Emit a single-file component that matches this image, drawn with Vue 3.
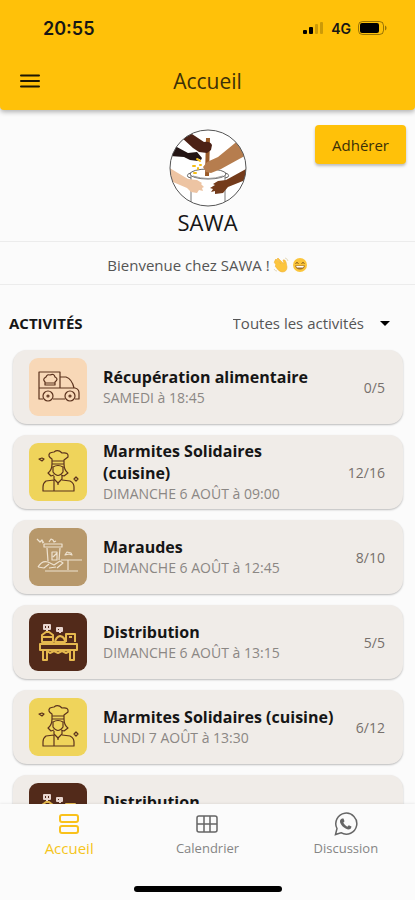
<script setup>
import { computed, ref } from 'vue';

const filter = ref('');
const currentTab = ref('home');

const activities = [
  { id: 1, type: 'truck', title: 'Récupération alimentaire', date: 'SAMEDI à 18:45', places: '0/5' },
  { id: 2, type: 'chef', title: 'Marmites Solidaires (cuisine)', date: 'DIMANCHE 6 AOÛT à 09:00', places: '12/16' },
  { id: 3, type: 'street', title: 'Maraudes', date: 'DIMANCHE 6 AOÛT à 12:45', places: '8/10' },
  { id: 4, type: 'stand', title: 'Distribution', date: 'DIMANCHE 6 AOÛT à 13:15', places: '5/5' },
  { id: 5, type: 'chef', title: 'Marmites Solidaires (cuisine)', date: 'LUNDI 7 AOÛT à 13:30', places: '6/12' },
  { id: 6, type: 'stand', title: 'Distribution', date: '', places: '' },
];

const titles = [...new Set(activities.map((a) => a.title))];
const visibleActivities = computed(() =>
  activities.filter((a) => !filter.value || a.title === filter.value)
);
</script>

<template>
  <div class="app">
    <header class="header">
      <div class="status">
        <span class="status__time">20:55</span>
        <div class="status__right">
          <svg width="21" height="14" viewBox="0 0 21 14">
            <rect x="0" y="9" width="4" height="4" rx="1" />
            <rect x="6" y="6" width="4" height="7" rx="1" />
            <rect x="12" y="3" width="3" height="10" rx="1" opacity="0.2" />
            <rect x="17" y="1" width="3" height="12" rx="1" opacity="0.2" />
          </svg>
          <span class="status__network">4G</span>
          <svg width="30" height="14" viewBox="0 0 30 14">
            <rect x="0.5" y="0.5" width="25" height="13" rx="4" fill="none" stroke="#000" opacity="0.4" />
            <rect x="2" y="2" width="19" height="10" rx="2" />
            <path d="M27 4.500c2 .7 2 4.300 0 5z" opacity="0.4" />
          </svg>
        </div>
      </div>
      <div class="toolbar">
        <button type="button" class="menu" aria-label="Menu">
          <svg width="20" height="14" viewBox="0 0 20 14">
            <path d="M1 1.500h18M1 7h18M1 12.500h18" stroke="#1c1703" stroke-width="2" stroke-linecap="round" />
          </svg>
        </button>
        <h1 class="toolbar__title">Accueil</h1>
      </div>
    </header>

    <main class="content">
      <section class="hero">
        <div class="brand">
          <svg class="brand__logo" viewBox="0 0 78 78">
            <defs>
              <clipPath id="disc"><circle cx="39" cy="39" r="38" /></clipPath>
            </defs>
            <circle cx="39" cy="39" r="38" fill="#fff" />
            <g clip-path="url(#disc)">
              <path d="M22 46v32M56 46v32" stroke="#777" fill="none" />
              <ellipse cx="39" cy="45" rx="18" ry="5" fill="#fff" stroke="#666" />
              <path d="M22 44q-5 1-3 4l3 1M56 44q5 1 3 4l-3 1" stroke="#666" fill="none" />
              <path d="M24 47q15 5 30 0" stroke="#999" fill="none" />
              <path d="M37 9h4l-1 38h-4z" fill="#9a5a28" />
              <path d="M80 15l-9-5-22 18-11 5-4 5 3 5 5 1 10-4 29-16z" fill="#b67d4e" />
              <path d="M12 8l8-5 15 10q6-1 8 3l-1 5-4 3-8-1-6-4z" fill="#4c2115" />
              <path d="M1 27l5-10 13 7 9-1 5 6-1 2-4-2 1 3-8-1-6-3z" fill="#241514" />
              <path d="M-1 38l20 12 9 1 5 3-1 1 3 3-2 1 1 3-4-1-2 3-6-1-4-4-21-9z" fill="#edc4a3" />
              <path d="M79 39l-22 12-8 1-5 3 2 1-5 3 3 1-2 3 4-1v3l8-1 5-6 22-9z" fill="#743b1b" />
              <path d="M28 30l3 2M24 37h2M29 39v1M25 44h2M31 36h1" stroke="#f5bf17" stroke-width="2" stroke-linecap="round" />
            </g>
            <circle cx="39" cy="39" r="38" fill="none" stroke="#555" />
          </svg>
          <h2 class="brand__name">SAWA</h2>
        </div>
        <button type="button" class="join">Adhérer</button>
      </section>

      <p class="welcome">
        <span>Bienvenue chez SAWA !</span>
        <svg width="16" height="16" viewBox="0 0 16 16" role="img" aria-label="👋">
          <path d="M2 3l1-1 5 5-4-5 1-1 6 6-1-4q2-1 3 2l1 5q0 5-5 5-3 0-7-6l1-1-2-3 1-1z" fill="#fcc53d" stroke="#f0b43c" stroke-width="0.6" />
          <path d="M1 12q1 2 3 2M12 1q2 0 3 3" fill="none" stroke="#e3d9bd" />
        </svg>
        <svg width="16" height="16" viewBox="0 0 16 16" role="img" aria-label="😄">
          <circle cx="8" cy="8" r="7" fill="#fbc53a" />
          <path d="M3.500 6.500q1.500-2 3 0M9.500 6.500q1.500-2 3 0" fill="none" stroke="#79511b" />
          <path d="M3 8.500h10q-1 4-5 4t-5-4z" fill="#a0702c" />
          <path d="M4 9h8l-1 1.500h-6z" fill="#fff" />
        </svg>
      </p>

      <div class="filter">
        <h3 class="filter__title">ACTIVITÉS</h3>
        <div class="filter__field">
          <select v-model="filter" class="filter__select" aria-label="Filtrer les activités">
            <option value="">Toutes les activités</option>
            <option v-for="title in titles" :key="title" :value="title">{{ title }}</option>
          </select>
          <svg class="filter__caret" width="10" height="5" viewBox="0 0 10 5"><path d="M0 0h10L5 5z" /></svg>
        </div>
      </div>

      <ul class="list">
        <li v-for="activity in visibleActivities" :key="activity.id" class="card">
          <div class="card__icon" :class="`card__icon--${activity.type}`">
            <svg v-if="activity.type === 'truck'" viewBox="0 0 58 58">
              <path d="M14 41h-4V14h21v16M10 30h36q4 1 4 5v6h-4M31 19h6q6 2 8 11M24 41h12" />
              <circle cx="19" cy="38" r="5" />
              <circle cx="41" cy="38" r="5" />
              <circle cx="19" cy="38" r="1" />
              <circle cx="41" cy="38" r="1" />
              <path d="M16 27v-3q-3-3 1-5 1-3 4-2 4-2 5 2 4 2 0 5v3zM16 25h10" />
            </svg>
            <svg v-else-if="activity.type === 'chef'" viewBox="0 0 58 58">
              <path d="M23 21v-5q-5-3-2-6 3-1 4-1 4-3 8 1 7-1 6 4l-4 3v4zM23 18h12M23 21q0 6-4 9l3 3 3-1M35 21q0 6 4 9l-4 3-3-1M24 24q5-3 10 0v5q-5 7-10 0zM25 33v3l4 4 4-4v-3" />
              <path d="M25 37l-8 1q-3 2-3 6v4h31v-4q0-4-4-6l-8-1M25 37v11M29 40v2" />
              <path d="M10 16l3-1 2 1-2 2zM45 36l2-2 2 2-2 2z" />
            </svg>
            <svg v-else-if="activity.type === 'street'" viewBox="0 0 58 58">
              <path d="M15 16h18v3H15zM18 20l1 13M31 20l-1 12M23 24h5v8h-5zM24 29l4-4M8 11l3 3 2-2 1 2M20 14l2-3 2 1 1 2 2-1M13 15l2-1" />
              <path d="M9 39q4-7 10-5l6 3 6-4 3 2-6 5M9 39l6 1 5-4M20 40l7-1M32 32h21M39 32v10M16 43h33M36 27l2-3 4 1 1 2-3-1z" />
            </svg>
            <svg v-else viewBox="0 0 58 58">
              <path d="M11 31h37v6H11zM14 37v10h4V37M41 37v10h4V37M13 29v-7l4-3h3l4 3v7zM13 24h11M26 29q1-5 5-6 5 1 5 6zM37 29v-8h9v8M40 24h3" />
              <path d="M18 38l3 2 4-2 4 2 4-2 4 2 4-2" />
              <path class="accent" d="M15 12h6v4h-6zM18 12v6M28 15h5v3h-5zM31 14v6" />
            </svg>
          </div>
          <div class="card__body">
            <h4 class="card__title">{{ activity.title }}</h4>
            <p class="card__date">{{ activity.date }}</p>
          </div>
          <span class="card__places">{{ activity.places }}</span>
        </li>
      </ul>
    </main>

    <footer class="footer">
      <nav class="tabs">
        <a href="#home" class="tab" :class="{ 'tab--active': currentTab === 'home' }" @click.prevent="currentTab = 'home'">
          <svg viewBox="0 0 24 24">
            <rect x="3" y="3" width="18" height="7" rx="2" stroke-width="2" />
            <rect x="3" y="14" width="18" height="7" rx="2" stroke-width="2" />
          </svg>
          <span>Accueil</span>
        </a>
        <a href="#calendar" class="tab" :class="{ 'tab--active': currentTab === 'calendar' }" @click.prevent="currentTab = 'calendar'">
          <svg viewBox="0 0 24 24">
            <rect x="2" y="4" width="20" height="16" rx="2" />
            <path d="M2 12h20M9 4v16M15 4v16" />
          </svg>
          <span>Calendrier</span>
        </a>
        <a href="#chat" class="tab" :class="{ 'tab--active': currentTab === 'chat' }" @click.prevent="currentTab = 'chat'">
          <svg viewBox="0 0 24 24">
            <path d="M1.500 22.500l1.500-6a10.500 10.500 0 1 1 4 4.200z" />
            <path d="M8 6.500l1.500 0 1 2.800-1.200 1.500q1.500 2.700 4 3.900l1.500-1.500 2.700 1.300q0 2.500-2.500 2.900c-4 .2-9.500-5-9-8.600q.2-1.500 2-2.300z" fill="currentColor" stroke="none" />
          </svg>
          <span>Discussion</span>
        </a>
      </nav>
      <div class="home-bar"></div>
    </footer>
  </div>
</template>

<style>
body {
  background: #fbfbfb;
}
</style>

<style scoped>
.app {
  display: flex;
  flex-direction: column;
  height: 100vh;
  font-family: 'Open Sans', 'Noto Sans', sans-serif;
  color: #161616;
}

h1,
h2,
h3,
h4,
p,
ul {
  margin: 0;
  padding: 0;
}

button,
select {
  font: inherit;
  border: none;
}

.header {
  flex: none;
  background: #ffc109;
  border-radius: 0 0 4px 4px;
  box-shadow: 0 2px 5px rgba(0, 0, 0, 0.3);
}

.status {
  display: flex;
  justify-content: space-between;
  align-items: center;
  height: 56px;
  padding: 0 27px 0 43px;
}

.status__time {
  font: 600 18px Inter, sans-serif;
}

.status__right {
  display: flex;
  align-items: center;
  gap: 7px;
}

.status__network {
  font: 600 14px Inter, sans-serif;
}

.toolbar {
  display: grid;
  grid-template-columns: 60px 1fr 60px;
  align-items: center;
  height: 50px;
  padding-bottom: 4px;
}

.menu {
  display: flex;
  padding: 10px 20px;
  background: none;
  cursor: pointer;
}

.toolbar__title {
  font-size: 21px;
  font-weight: 400;
  line-height: 30px;
  text-align: center;
  color: #3c3008;
}

.content {
  flex: 1;
  min-height: 0;
  overflow: hidden;
}

.hero {
  display: grid;
  grid-template-columns: 1fr auto 1fr;
  align-items: start;
  padding: 15px 9px 4px;
  border-bottom: 1px solid #ececec;
}

.brand {
  display: flex;
  flex-direction: column;
  align-items: center;
  grid-column: 2;
  padding-top: 4px;
}

.brand__logo {
  width: 78px;
  height: 78px;
}

.brand__name {
  font-size: 22px;
  font-weight: 400;
  line-height: 30px;
}

.join {
  justify-self: end;
  height: 39px;
  padding: 0 17px;
  font-size: 15px;
  color: #3c3008;
  background: #ffc109;
  border-radius: 4px;
  box-shadow: 0 2px 3px rgba(0, 0, 0, 0.25);
  cursor: pointer;
}

.welcome {
  display: flex;
  justify-content: center;
  align-items: center;
  gap: 3px;
  height: 38px;
  padding-top: 4px;
  font-size: 15px;
  color: #555;
  border-bottom: 1px solid #ececec;
}

.filter {
  display: flex;
  justify-content: space-between;
  align-items: center;
  padding: 26px 25px 15px 9px;
}

.filter__title {
  font-size: 15px;
  font-weight: 700;
  line-height: 24px;
}

.filter__field {
  display: grid;
  align-items: center;
}

.filter__select {
  grid-area: 1 / 1;
  height: 24px;
  padding: 0 26px 0 0;
  font-size: 15px;
  color: #555;
  background: none;
  appearance: none;
  field-sizing: content;
  cursor: pointer;
}

.filter__caret {
  grid-area: 1 / 1;
  justify-self: end;
  pointer-events: none;
}

.list {
  display: flex;
  flex-direction: column;
  gap: 11px;
  padding: 0 12px 16px 13px;
  list-style: none;
}

.card {
  display: flex;
  align-items: center;
  gap: 16px;
  box-sizing: border-box;
  min-height: 74px;
  padding: 5px 18px 5px 16px;
  background: #f0ece8;
  border-radius: 14px;
  box-shadow: 0 1px 2px rgba(0, 0, 0, 0.25);
}

.card__icon {
  flex: none;
  width: 58px;
  height: 58px;
  border-radius: 9px;
}

.card__icon svg {
  display: block;
  fill: none;
  stroke: #5b321d;
  stroke-width: 1.2;
  stroke-linejoin: round;
}

.card__icon--truck {
  background: #f8d8b7;
}

.card__icon--chef {
  background: #efd45b;
}

.card__icon--street {
  background: #b7986b;
}

.card__icon--street svg {
  stroke: #eee2d0;
}

.card__icon--stand {
  background: #522a1a;
}

.card__icon--stand svg {
  stroke: #e5b94f;
  stroke-width: 2;
}

.card__icon--stand .accent {
  stroke: #e8d5cf;
}

.card__body {
  flex: 1;
}

.card__title {
  font-size: 16px;
  font-weight: 700;
  line-height: 22px;
}

.card__date {
  min-height: 20px;
  font-size: 14px;
  line-height: 20px;
  color: #8b8784;
}

.card__places {
  font-size: 14px;
  color: #77706c;
}

.footer {
  display: flex;
  flex-direction: column;
  flex: none;
  gap: 28px;
  padding: 8px 0;
  background: #fbfbfb;
  box-shadow: 0 -1px 2px rgba(0, 0, 0, 0.06);
}

.tabs {
  display: grid;
  grid-template-columns: repeat(3, 1fr);
}

.tab {
  display: flex;
  flex-direction: column;
  align-items: center;
  gap: 2px;
  font-size: 13px;
  line-height: 20px;
  color: #858585;
  text-decoration: none;
}

.tab svg {
  width: 24px;
  height: 24px;
  fill: none;
  stroke: #666;
  stroke-width: 1.5;
  color: #666;
}

.tab--active {
  font-size: 15px;
  color: #f5c51b;
}

.tab--active svg {
  stroke: #f9c11b;
}

.home-bar {
  align-self: center;
  width: 148px;
  height: 6px;
  background: #000;
  border-radius: 3px;
}
</style>
